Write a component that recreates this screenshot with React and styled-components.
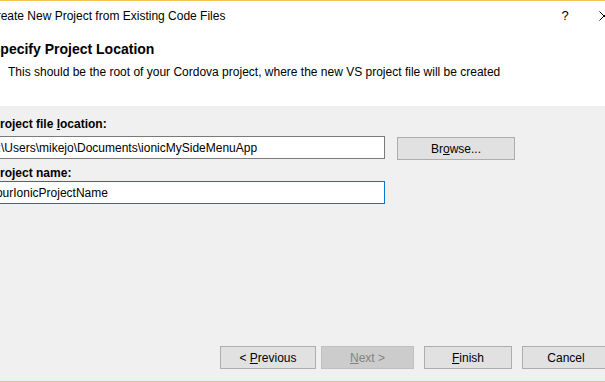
import React from "react";
import styled, { createGlobalStyle } from "styled-components";

const GlobalStyle = createGlobalStyle`
  html, body {
    margin: 0;
    padding: 0;
    background: #ffffff;
  }
  body {
    font-family: "Liberation Sans", Arial, sans-serif;
    font-size: 12px;
    color: #000;
  }
`;

const Viewport = styled.div`
  width: 605px;
  height: 382px;
  overflow: hidden;
  border-top: 1px solid #f1c453;
  border-bottom: 1px solid #f1c453;
  box-sizing: border-box;
`;

const Frame = styled.div`
  margin-left: -20px;
  width: 642px;
  height: 100%;
  display: flex;
  flex-direction: column;
  background: #f0f0f0;
`;

const TitleBar = styled.div`
  height: 29px;
  display: flex;
  align-items: center;
  padding-left: 8px;
  background: #ffffff;
`;

const TitleText = styled.div`
  flex: 1;
`;

const HelpButton = styled.div`
  width: 38px;
  display: flex;
  justify-content: center;
  align-items: center;
  font-size: 13px;
`;

const CloseButton = styled.div`
  width: 38px;
  box-sizing: border-box;
  padding-left: 15px;
  display: flex;
  align-items: center;
`;

const Header = styled.div`
  height: 76px;
  background: #ffffff;
  padding-left: 11px;
  padding-top: 9px;
  box-sizing: border-box;
`;

const Heading = styled.div`
  font-weight: bold;
  font-size: 14px;
  line-height: 20px;
`;

const Description = styled.div`
  margin-top: 5px;
  padding-left: 17px;
  line-height: 16px;
`;

const Body = styled.div`
  flex: 1;
  padding: 10px 12px 0 12px;
  display: flex;
  flex-direction: column;
`;

const Label = styled.div`
  font-weight: bold;
  line-height: 16px;
  margin-top: ${(p) => p.$top || 0}px;
`;

const Row = styled.div`
  display: flex;
  align-items: flex-start;
  gap: 12px;
  margin-top: ${(p) => p.$top}px;
`;

const Field = styled.div`
  width: 399px;
  height: 23px;
  margin-left: -6px;
  box-sizing: border-box;
  border: 1px solid ${(p) => (p.$focused ? "#0078d7" : "#7a7a7a")};
  background: #ffffff;
  display: flex;
  align-items: center;
  padding-left: 2px;
  white-space: nowrap;
`;

const Button = styled.div`
  width: ${(p) => p.$w}px;
  height: 23px;
  box-sizing: border-box;
  border: 1px solid ${(p) => (p.$disabled ? "#bfbfbf" : "#adadad")};
  background: ${(p) => (p.$disabled ? "#cccccc" : "#e1e1e1")};
  color: ${(p) => (p.$disabled ? "#838383" : "#000")};
  display: flex;
  align-items: center;
  justify-content: center;
  margin-top: ${(p) => p.$top || 0}px;
`;

const Footer = styled.div`
  display: flex;
  justify-content: flex-end;
  padding: 0 12px 12px 0;
`;

const Spacer = styled.div`
  width: ${(p) => p.$w}px;
`;

const App = () => (
  <>
    <GlobalStyle />
    <Viewport>
      <Frame>
        <TitleBar>
          <TitleText>Create New Project from Existing Code Files</TitleText>
          <HelpButton>?</HelpButton>
          <CloseButton>
            <svg width="10" height="10" viewBox="0 0 10 10">
              <path d="M0.5 0.5 L9.5 9.5 M9.5 0.5 L0.5 9.5" stroke="#000" strokeWidth="1" fill="none" />
            </svg>
          </CloseButton>
        </TitleBar>
        <Header>
          <Heading>Specify Project Location</Heading>
          <Description>
            This should be the root of your Cordova project, where the new VS project file will be created
          </Description>
        </Header>
        <Body>
          <Label>
            Project file <u>l</u>ocation:
          </Label>
          <Row $top={4}>
            <Field>C:\Users\mikejo\Documents\ionicMySideMenuApp</Field>
            <Button $w={118} $top={1}>
              Br<u>o</u>wse...
            </Button>
          </Row>
          <Label $top={5}>
            <u>P</u>roject name:
          </Label>
          <Row $top={0}>
            <Field $focused>YourIonicProjectName</Field>
          </Row>
        </Body>
        <Footer>
          <Button $w={96}>
            &lt;&nbsp;<u>P</u>revious
          </Button>
          <Spacer $w={5} />
          <Button $w={93} $disabled>
            <u>N</u>ext &gt;
          </Button>
          <Spacer $w={10} />
          <Button $w={88}>
            <u>F</u>inish
          </Button>
          <Spacer $w={10} />
          <Button $w={88}>Cancel</Button>
        </Footer>
      </Frame>
    </Viewport>
  </>
);

export default App;
